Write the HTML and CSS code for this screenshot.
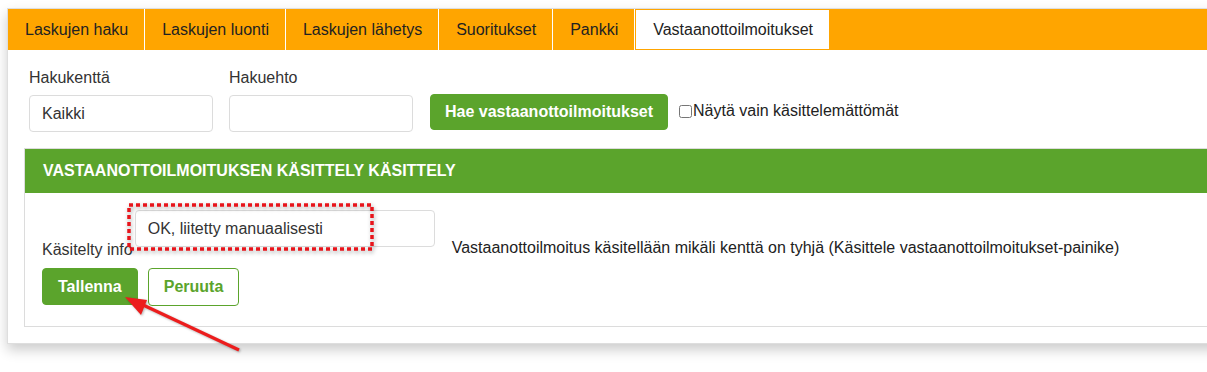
FILE: index.html
```html
<!DOCTYPE html>
<html lang="fi">
<head>
    <meta charset="UTF-8">
    <title>Vastaanottoilmoitukset</title>
    <link rel="stylesheet" href="styles.css">
</head>
<body>
    <div class="panel">
        <div class="tabs">
            <div class="tab">Laskujen haku</div>
            <div class="tab">Laskujen luonti</div>
            <div class="tab">Laskujen lähetys</div>
            <div class="tab">Suoritukset</div>
            <div class="tab">Pankki</div>
            <div class="tab active">Vastaanottoilmoitukset</div>
        </div>

        <div class="search">
            <div class="field">
                <label>Hakukenttä</label>
                <input type="text" class="text-input" value="Kaikki">
            </div>
            <div class="field">
                <label>Hakuehto</label>
                <input type="text" class="text-input">
            </div>
            <button class="btn btn-green search-btn">Hae vastaanottoilmoitukset</button>
            <label class="check"><input type="checkbox">Näytä vain käsittelemättömät</label>
        </div>

        <div class="section">
            <div class="section-header">Vastaanottoilmoituksen käsittely käsittely</div>
            <div class="section-body">
                <div class="info-row">
                    <label class="info-label">Käsitelty info</label>
                    <input type="text" class="text-input wide" value="OK, liitetty manuaalisesti">
                    <span class="hint">Vastaanottoilmoitus käsitellään mikäli kenttä on tyhjä (Käsittele vastaanottoilmoitukset-painike)</span>
                </div>
                <div class="actions">
                    <button class="btn btn-green save">Tallenna</button>
                    <button class="btn btn-outline cancel">Peruuta</button>
                </div>
            </div>
        </div>
    </div>

    <!-- annotations drawn over the screenshot -->
    <svg class="mark" width="252" height="52" viewBox="0 0 252 52">
        <rect x="2" y="2" width="243" height="44" fill="none" stroke="#e8141b" stroke-width="3.5" stroke-dasharray="4 3"/>
    </svg>
    <svg class="arrow" width="140" height="70" viewBox="0 0 140 70">
        <line x1="116" y1="55" x2="18" y2="9" stroke="#ec1d1d" stroke-width="3.2"/>
        <polygon points="2,2 18,20 24,5" fill="#ec1d1d"/>
    </svg>
</body>
</html>
```

FILE: styles.css
```css
body {
    margin: 0;
    font-family: "Liberation Sans", Arial, sans-serif;
    font-size: 16px;
    color: #333;
    background: #fff;
    overflow: hidden;
    position: relative;
    height: 372px;
}

.panel {
    margin: 8px 0 0 7px;
    width: 1260px;
    background: #fff;
    border: 1px solid #dedede;
    box-shadow: 0 6px 12px rgba(0, 0, 0, 0.2);
}

.tabs {
    display: flex;
    height: 41px;
    background-color: #ffa500;
}

.tab {
    padding: 0 16px 0 17px;
    line-height: 41px;
    color: #222;
    border-right: 1px solid #fff;
}

.tab.active {
    background-color: #fff;
    border: 1px solid #ffa500;
    line-height: 39px;
}

.search {
    display: flex;
    align-items: flex-end;
    padding: 19px 0 16px 21px;
}

.field {
    display: flex;
    flex-direction: column;
    margin-right: 16px;
}

.field label {
    line-height: 18px;
    margin-bottom: 8px;
}

.text-input {
    width: 184px;
    height: 37px;
    box-sizing: border-box;
    border: 1px solid #dcdcdc;
    border-radius: 4px;
    padding: 0 12px;
    font-family: "Liberation Sans", Arial, sans-serif;
    font-size: 16px;
    color: #333;
    background: #fff;
}

.btn {
    height: 36px;
    border-radius: 4px;
    font-family: "Liberation Sans", Arial, sans-serif;
    font-size: 16px;
    font-weight: bold;
    cursor: pointer;
}

.btn-green {
    background-color: #5ba42c;
    border: 1px solid #5ba42c;
    color: #fff;
}

.btn-outline {
    background-color: #fff;
    border: 1px solid #5ba42c;
    color: #5ba42c;
}

.search-btn {
    margin: 0 0 2px 1px;
    padding: 0 14px;
}

.check {
    display: flex;
    align-items: center;
    margin: 0 0 12px 11px;
    line-height: 18px;
    color: #222;
}

.check input {
    width: 13px;
    height: 13px;
    margin: 0 1px 0 0;
}

.section {
    margin: 0 0 16px 16px;
    border: 1px solid #dcdcdc;
}

.section-header {
    height: 44px;
    line-height: 44px;
    padding-left: 18px;
    background-color: #5ba42c;
    color: #fff;
    font-weight: bold;
    text-transform: uppercase;
}

.section-body {
    padding: 17px 17px 20px 17px;
}

.info-row {
    display: flex;
    align-items: flex-start;
}

.info-label {
    padding-top: 31px;
    line-height: 18px;
}

.text-input.wide {
    width: 300px;
    margin-left: 2px;
}

.hint {
    margin-left: 17px;
    padding-top: 29px;
    line-height: 18px;
    color: #222;
}

.actions {
    display: flex;
    gap: 10px;
    margin-top: 9px;
}

.save {
    height: 37px;
    padding: 0 15px;
}

.cancel {
    height: 38px;
    padding: 0 15px;
}

.mark {
    position: absolute;
    left: 127px;
    top: 203px;
    filter: drop-shadow(1px 2px 2px rgba(0, 0, 0, 0.35));
}

.arrow {
    position: absolute;
    left: 123px;
    top: 295px;
    filter: drop-shadow(1px 1px 1px rgba(0, 0, 0, 0.3));
}
```
